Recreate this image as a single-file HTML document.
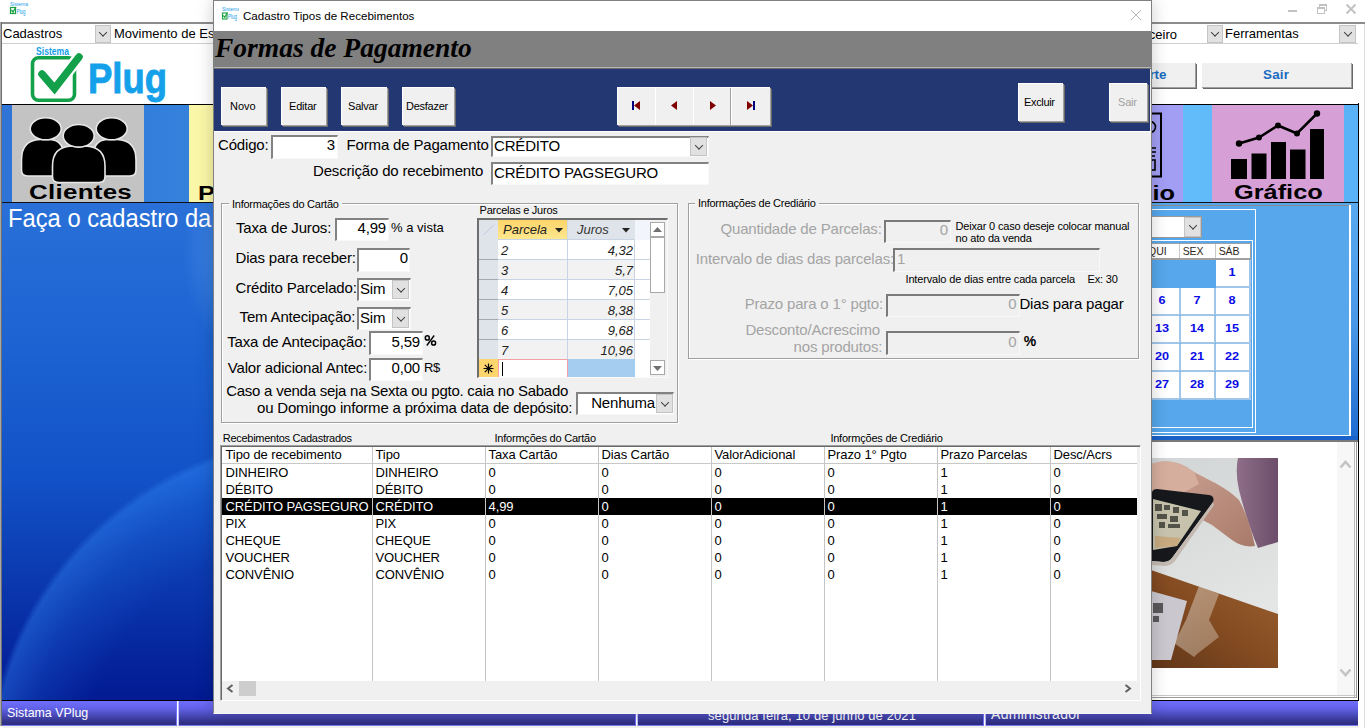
<!DOCTYPE html>
<html><head><meta charset="utf-8">
<style>
*{box-sizing:border-box;margin:0;padding:0}
html,body{width:1366px;height:728px;overflow:hidden;background:#fff;font-family:"Liberation Sans",sans-serif;color:#000}
.a{position:absolute}
.t{position:absolute;white-space:nowrap;line-height:1}
.combo{position:absolute;background:#fff;border-bottom:1px solid #d0d0d0}
.cbtn{position:absolute;background:#e1e1e1;border:1px solid #c4c4c4}
.cbtn:after{content:"";position:absolute;left:50%;top:50%;width:5px;height:5px;border-right:1px solid #404040;border-bottom:1px solid #404040;transform:translate(-50%,-75%) rotate(45deg)}
.btn3{position:absolute;background:#f0f0f0;border-top:1px solid #fff;border-left:1px solid #fff;box-shadow:1px 1px 0 #a0a0a0,2px 2px 0 #696969;}
.sunk{position:absolute;background:#fff;border-top:2px solid #828282;border-left:2px solid #828282;border-bottom:1px solid #f8f8f8;border-right:1px solid #f8f8f8}
.dis{background:#f0f0f0}
</style></head><body>
<!-- ============ MAIN WINDOW ============ -->
<div id="main" class="a" style="left:0;top:0;width:1366px;height:728px;background:#fff">

  <!-- title bar -->
  <svg class="a" style="left:9px;top:1px" width="19" height="15" viewBox="0 0 19 15" overflow="visible">
    <text x="1" y="5" font-family="Liberation Sans" font-size="5" fill="#1aa0e8">Sistema</text>
    <rect x="1.5" y="6.5" width="5" height="6" fill="none" stroke="#18a040" stroke-width="1.2"/>
    <path d="M2.5 9 L4 11 L7 6" fill="none" stroke="#18a040" stroke-width="1.3"/>
    <text x="7.5" y="12.5" font-family="Liberation Sans" font-size="6.5" fill="#1aa0e8" textLength="9" lengthAdjust="spacingAndGlyphs">Plug</text>
  </svg>
  <div class="a" style="left:1288px;top:10px;width:9px;height:2px;background:#c2c2c2"></div>
  <div class="a" style="left:1319px;top:4px;width:8px;height:7px;border:1px solid #c2c2c2;border-top-width:2px"></div>
  <div class="a" style="left:1317px;top:7px;width:8px;height:7px;border:1px solid #c2c2c2;border-top-width:2px;background:#fff"></div>
  <svg class="a" style="left:1345px;top:3px" width="12" height="12" viewBox="0 0 12 12"><path d="M1.5 1.5L10.5 10.5M10.5 1.5L1.5 10.5" stroke="#c2c2c2" stroke-width="1.9"/></svg>
  <!-- frame lines -->
  <div class="a" style="left:0;top:22px;width:1365px;height:2px;background:#8c8c8c"></div>
  <div class="a" style="left:0;top:22px;width:1px;height:704px;background:#a8a8a8"></div><div class="a" style="left:1px;top:22px;width:1px;height:704px;background:#6e6e6e"></div>
  <div class="a" style="left:1364px;top:24px;width:1px;height:704px;background:#dcdcdc"></div>
  <!-- combos row -->
  <div class="combo" style="left:2px;top:24px;width:1356px;height:20px"></div>
  <div class="t" style="left:3px;top:27px;font-size:13px">Cadastros</div>
  <div class="cbtn" style="left:95px;top:25px;width:16px;height:18px"></div>
  <div class="t" style="left:114px;top:27px;font-size:13px">Movimento de Es</div>
  <div class="t" style="left:777px;width:400px;text-align:right;top:28px;font-size:13px">Financeiro</div>
  <div class="cbtn" style="left:1207px;top:25px;width:16px;height:18px"></div>
  <div class="t" style="left:1225px;top:27px;font-size:13px">Ferramentas</div>
  <div class="cbtn" style="left:1339px;top:25px;width:17px;height:18px"></div>
  <!-- logo -->
  <svg class="a" style="left:28px;top:44px" width="142" height="60" viewBox="0 0 142 60">
    <text x="8" y="10.5" font-family="Liberation Sans" font-weight="bold" font-size="10.5" fill="#15a0ea" textLength="33" lengthAdjust="spacingAndGlyphs">Sistema</text>
    <rect x="4.5" y="13.8" width="42" height="42.5" rx="6" fill="none" stroke="#12a04a" stroke-width="3.6"/>
    <path d="M14 30 L26.5 44.5 L51 13" fill="none" stroke="#fff" stroke-width="12" stroke-linecap="round" stroke-linejoin="round"/>
    <path d="M14 30 L26.5 44.5 L51 13" fill="none" stroke="#12a04a" stroke-width="7.5" stroke-linecap="round" stroke-linejoin="miter"/>
    <text x="60" y="49" font-family="Liberation Sans" font-weight="bold" font-size="43" fill="#15a0ea" stroke="#15a0ea" stroke-width="0.9" textLength="79" lengthAdjust="spacingAndGlyphs">Plug</text>
  </svg>
  <!-- top right buttons -->
  <div class="btn3" style="left:1120px;top:62px;width:75px;height:25px"></div>
    <div class="btn3" style="left:1201px;top:62px;width:150px;height:25px"></div>
  <div class="t" style="left:1263px;top:68px;font-size:13.4px;font-weight:bold;color:#1a6cc0;letter-spacing:0.2px">Sair</div>
  <!-- tile row -->
  <div class="a" style="left:2px;top:104px;width:1357px;height:1px;background:#000"></div>
  <div class="a" style="left:2px;top:105px;width:1356px;height:97px;background:linear-gradient(90deg,#2f74d6,#3582dc 15%,#4a98e6 60%,#64befb 85%,#5ab2f6)"></div>
  <div class="a" style="left:1358px;top:103px;width:1px;height:598px;background:#000"></div>
  <div class="a" style="left:12px;top:105px;width:132px;height:97px;background:#c3c3c3"></div>
  <div class="a" style="left:189px;top:105px;width:30px;height:97px;background:#fbf7a8"></div>
  <div class="a" style="left:1100px;top:105px;width:83px;height:97px;background:#a29ef4"></div>
  <div class="a" style="left:1212px;top:105px;width:132px;height:97px;background:#d6a0d6"></div>
  <div class="a" style="left:2px;top:202px;width:1357px;height:1px;background:#111"></div>
  <!-- main blue area -->
  <div class="a" style="left:2px;top:203px;width:1356px;height:497px;background:radial-gradient(circle 345px at 328px 577px,rgba(40,125,240,0) 72%,rgba(40,125,240,0.2) 88%,rgba(50,135,245,0.4) 98%,rgba(40,125,240,0) 100%),radial-gradient(ellipse 55px 90px at 236px 55px,rgba(95,165,240,0.6),rgba(95,165,240,0) 100%),linear-gradient(180deg,#2a70d8 0%,#1c62d2 30%,#1252c8 55%,#0a36ac 78%,#021a92 100%)"></div>
  <div class="t" style="left:8px;top:206px;font-size:25px;color:#fff;transform:scaleX(0.95);transform-origin:0 0">Faça o cadastro da</div>
<!--MAIN2-->
<svg class="a" style="left:12px;top:105px" width="132" height="97" viewBox="12 105 132 97">
<g stroke="#e8e8e8" stroke-width="1.6">
<path d="M21.5 170 V160 Q21.5 140 40 139.5 H50 Q64 140 64 158 V176 H27.5 Q21.5 176 21.5 170 Z" fill="#000"/>
<path d="M93 176 V158 Q93 140 107 139.5 H117 Q136 140 136 160 V170 Q136 176 130 176 Z" fill="#000"/>
<ellipse cx="45.7" cy="128.8" rx="15.5" ry="11" fill="#000"/>
<ellipse cx="111.7" cy="128.8" rx="15.5" ry="11" fill="#000"/>
<path d="M52.5 176.5 V166 Q52.5 146.5 72 146 H85 Q105 146.5 105 166 V176.5 Q105 182.5 99 182.5 H58.5 Q52.5 182.5 52.5 176.5 Z" fill="#000"/>
<ellipse cx="78.7" cy="135.8" rx="15.5" ry="11.3" fill="#000"/>
</g>
</svg>
<div class="t" style="left:29px;top:183px;font-size:19.5px;font-weight:bold;transform:scaleX(1.33);transform-origin:0 0;letter-spacing:0.2px">Clientes</div>
<div class="t" style="left:198px;top:184px;font-size:19.5px;font-weight:bold;transform:scaleX(1.3);transform-origin:0 0">P</div>
<svg class="a" style="left:1212px;top:105px" width="132" height="97" viewBox="1212 105 132 97">
<rect x="1231" y="159" width="16" height="20" fill="#000"/>
<rect x="1251.5" y="153.5" width="15" height="25.5" fill="#000"/>
<rect x="1271" y="142" width="15" height="37" fill="#000"/>
<rect x="1290" y="149.5" width="15.5" height="29.5" fill="#000"/>
<rect x="1310" y="129" width="14" height="50" fill="#000"/>
<path d="M1239 143.5 L1259 137.5 L1278 125.5 L1297 133.5 L1317 113.5" fill="none" stroke="#000" stroke-width="2.6"/>
<circle cx="1239" cy="143.5" r="3.2"/><circle cx="1259" cy="137.5" r="3"/><circle cx="1278" cy="125.5" r="3"/><circle cx="1297" cy="133.5" r="3"/><circle cx="1317" cy="113.5" r="3.2"/>
</svg>
<div class="t" style="left:1234px;top:183px;font-size:19.5px;font-weight:bold;transform:scaleX(1.3);transform-origin:0 0">Gráfico</div>
<svg class="a" style="left:1151px;top:105px" width="32" height="97" viewBox="1151 105 32 97">
<rect x="1140" y="113.5" width="21" height="63" fill="none" stroke="#000" stroke-width="2"/>
<circle cx="1150" cy="127" r="5.5" fill="none" stroke="#000" stroke-width="1.6"/>
<path d="M1146 148H1156M1146 152H1156M1146 156H1155" stroke="#000" stroke-width="1.3"/>
<rect x="1144" y="160" width="11" height="10" fill="none" stroke="#000" stroke-width="1.6"/>
</svg>
<div class="t" style="left:775px;width:400px;text-align:right;top:183.79px;font-size:19.5px;font-weight:bold;transform:scaleX(1.3);transform-origin:100% 0">io</div>
<div class="a" style="left:1151px;top:203px;width:207px;height:237px;background:#56a7ec"></div>
<div class="a" style="left:1351px;top:203px;width:7px;height:237px;background:linear-gradient(180deg,#5aaaf0,#4a98e8 50%,#1f6ad0)"></div>
<div class="a" style="left:1151px;top:436px;width:207px;height:4px;background:#1a62c9"></div>
<div class="a" style="left:1151px;top:205px;width:200px;height:1px;background:#8a8a8a"></div>
<div class="a" style="left:1349px;top:205px;width:2px;height:231px;background:#fff"></div>
<div class="a" style="left:1151px;top:435px;width:200px;height:1px;background:#fff"></div>
<div class="a" style="left:1140px;top:209px;width:116px;height:224px;border:1px solid #fff;border-left:none"></div>
<div class="a" style="left:1140px;top:240px;width:113px;height:188px;border:1px solid #fff;border-left:none"></div>
<div class="a" style="left:1151px;top:216px;width:51px;height:22px;background:#fff;border:1px solid #9a9a9a;border-left:none"></div>
<div class="cbtn" style="left:1184px;top:217px;width:17px;height:20px"></div>
<div class="a" style="left:1140px;top:243px;width:111px;height:17px;background:#fff;border:1px solid #a0a0a0;border-left:none;border-bottom:2px solid #a0a0a0"></div>
<div class="a" style="left:1179px;top:244px;width:1px;height:14px;background:#c8c8c8"></div>
<div class="a" style="left:1215px;top:244px;width:1px;height:14px;background:#c8c8c8"></div>
<div class="t" style="left:1148px;top:245.91px;font-size:10.5px;color:#302818">QUI</div>
<div class="t" style="left:1182.7px;top:245.91px;font-size:10.5px;color:#302818;letter-spacing:-0.1px">SEX</div>
<div class="t" style="left:1218.7px;top:245.91px;font-size:10.5px;color:#302818;letter-spacing:-0.1px">SÁB</div>
<div class="a" style="left:1216px;top:260px;width:33px;height:26px;background:#fff"></div>
<div class="a" style="left:1216px;top:286px;width:34px;height:1.5px;background:#a2c6ea"></div>
<div class="t" style="left:1211.5px;width:40px;text-align:center;top:267.27px;font-size:11.5px;font-weight:bold;color:#0b0be8;transform:scaleX(1.1)">1</div>
<div class="a" style="left:1140px;top:288px;width:39px;height:26px;background:#fff"></div>
<div class="a" style="left:1140px;top:314px;width:40px;height:1.5px;background:#a2c6ea"></div>
<div class="t" style="left:1141.5px;width:40px;text-align:center;top:295.27px;font-size:11.5px;font-weight:bold;color:#0b0be8;transform:scaleX(1.1)">6</div>
<div class="a" style="left:1181px;top:288px;width:33px;height:26px;background:#fff"></div>
<div class="a" style="left:1181px;top:314px;width:34px;height:1.5px;background:#a2c6ea"></div>
<div class="t" style="left:1176.5px;width:40px;text-align:center;top:295.27px;font-size:11.5px;font-weight:bold;color:#0b0be8;transform:scaleX(1.1)">7</div>
<div class="a" style="left:1216px;top:288px;width:33px;height:26px;background:#fff"></div>
<div class="a" style="left:1216px;top:314px;width:34px;height:1.5px;background:#a2c6ea"></div>
<div class="t" style="left:1211.5px;width:40px;text-align:center;top:295.27px;font-size:11.5px;font-weight:bold;color:#0b0be8;transform:scaleX(1.1)">8</div>
<div class="a" style="left:1140px;top:316px;width:39px;height:26px;background:#fff"></div>
<div class="a" style="left:1140px;top:342px;width:40px;height:1.5px;background:#a2c6ea"></div>
<div class="t" style="left:1141.5px;width:40px;text-align:center;top:323.27px;font-size:11.5px;font-weight:bold;color:#0b0be8;transform:scaleX(1.1)">13</div>
<div class="a" style="left:1181px;top:316px;width:33px;height:26px;background:#fff"></div>
<div class="a" style="left:1181px;top:342px;width:34px;height:1.5px;background:#a2c6ea"></div>
<div class="t" style="left:1176.5px;width:40px;text-align:center;top:323.27px;font-size:11.5px;font-weight:bold;color:#0b0be8;transform:scaleX(1.1)">14</div>
<div class="a" style="left:1216px;top:316px;width:33px;height:26px;background:#fff"></div>
<div class="a" style="left:1216px;top:342px;width:34px;height:1.5px;background:#a2c6ea"></div>
<div class="t" style="left:1211.5px;width:40px;text-align:center;top:323.27px;font-size:11.5px;font-weight:bold;color:#0b0be8;transform:scaleX(1.1)">15</div>
<div class="a" style="left:1140px;top:344px;width:39px;height:26px;background:#fff"></div>
<div class="a" style="left:1140px;top:370px;width:40px;height:1.5px;background:#a2c6ea"></div>
<div class="t" style="left:1141.5px;width:40px;text-align:center;top:351.27px;font-size:11.5px;font-weight:bold;color:#0b0be8;transform:scaleX(1.1)">20</div>
<div class="a" style="left:1181px;top:344px;width:33px;height:26px;background:#fff"></div>
<div class="a" style="left:1181px;top:370px;width:34px;height:1.5px;background:#a2c6ea"></div>
<div class="t" style="left:1176.5px;width:40px;text-align:center;top:351.27px;font-size:11.5px;font-weight:bold;color:#0b0be8;transform:scaleX(1.1)">21</div>
<div class="a" style="left:1216px;top:344px;width:33px;height:26px;background:#fff"></div>
<div class="a" style="left:1216px;top:370px;width:34px;height:1.5px;background:#a2c6ea"></div>
<div class="t" style="left:1211.5px;width:40px;text-align:center;top:351.27px;font-size:11.5px;font-weight:bold;color:#0b0be8;transform:scaleX(1.1)">22</div>
<div class="a" style="left:1140px;top:372px;width:39px;height:26px;background:#fff"></div>
<div class="a" style="left:1140px;top:398px;width:40px;height:1.5px;background:#a2c6ea"></div>
<div class="t" style="left:1141.5px;width:40px;text-align:center;top:379.27px;font-size:11.5px;font-weight:bold;color:#0b0be8;transform:scaleX(1.1)">27</div>
<div class="a" style="left:1181px;top:372px;width:33px;height:26px;background:#fff"></div>
<div class="a" style="left:1181px;top:398px;width:34px;height:1.5px;background:#a2c6ea"></div>
<div class="t" style="left:1176.5px;width:40px;text-align:center;top:379.27px;font-size:11.5px;font-weight:bold;color:#0b0be8;transform:scaleX(1.1)">28</div>
<div class="a" style="left:1216px;top:372px;width:33px;height:26px;background:#fff"></div>
<div class="a" style="left:1216px;top:398px;width:34px;height:1.5px;background:#a2c6ea"></div>
<div class="t" style="left:1211.5px;width:40px;text-align:center;top:379.27px;font-size:11.5px;font-weight:bold;color:#0b0be8;transform:scaleX(1.1)">29</div>
<div class="a" style="left:1179px;top:288px;width:2px;height:27px;background:#a2c6ea"></div>
<div class="a" style="left:1214px;top:288px;width:2px;height:27px;background:#a2c6ea"></div>
<div class="a" style="left:1179px;top:316px;width:2px;height:27px;background:#a2c6ea"></div>
<div class="a" style="left:1214px;top:316px;width:2px;height:27px;background:#a2c6ea"></div>
<div class="a" style="left:1179px;top:344px;width:2px;height:27px;background:#a2c6ea"></div>
<div class="a" style="left:1214px;top:344px;width:2px;height:27px;background:#a2c6ea"></div>
<div class="a" style="left:1179px;top:372px;width:2px;height:27px;background:#a2c6ea"></div>
<div class="a" style="left:1214px;top:372px;width:2px;height:27px;background:#a2c6ea"></div>
<div class="a" style="left:1249px;top:260px;width:1.5px;height:140px;background:#a2c6ea"></div>
<div class="a" style="left:1151px;top:440px;width:207px;height:261px;background:#fff;border-top:2px solid #7a7a7a"></div>
<div class="a" style="left:1337px;top:442px;width:17px;height:253px;background:#f7f7f7"></div>
<div class="a" style="left:1354px;top:442px;width:1px;height:255px;background:#b8b8b8"></div>
<div class="a" style="left:1356px;top:442px;width:1px;height:256px;background:#9a9a9a"></div>
<div class="a" style="left:1151px;top:695px;width:205px;height:1px;background:#c8c8c8"></div>
<div class="a" style="left:1151px;top:697px;width:206px;height:1px;background:#9a9a9a"></div>
<svg class="a" style="left:1339px;top:459px" width="13" height="10" viewBox="0 0 13 10"><path d="M1.5 8.5L6.5 3L11.5 8.5" fill="none" stroke="#c4c4c4" stroke-width="2.6"/></svg>
<svg class="a" style="left:1339px;top:668px" width="13" height="10" viewBox="0 0 13 10"><path d="M1.5 1.5L6.5 7L11.5 1.5" fill="none" stroke="#c4c4c4" stroke-width="2.6"/></svg>
<svg class="a" style="left:1151px;top:458px" width="127" height="210" viewBox="0 0 127 210">
<defs>
<linearGradient id="bgw" x1="0" y1="0" x2="0.3" y2="1"><stop offset="0" stop-color="#d2d5d5"/><stop offset="0.5" stop-color="#dcdede"/><stop offset="1" stop-color="#e6e7e7"/></linearGradient>
<linearGradient id="wood" x1="1" y1="0" x2="0" y2="1"><stop offset="0" stop-color="#9c6230"/><stop offset="0.5" stop-color="#854c22"/><stop offset="1" stop-color="#603618"/></linearGradient>
<linearGradient id="skin" x1="0" y1="0" x2="1" y2="1"><stop offset="0" stop-color="#d0a696"/><stop offset="1" stop-color="#a87a6a"/></linearGradient>
<linearGradient id="slv" x1="0" y1="0" x2="1" y2="0"><stop offset="0" stop-color="#8e6e88"/><stop offset="1" stop-color="#6c4e6a"/></linearGradient>
<linearGradient id="glr" x1="0" y1="0" x2="1" y2="1"><stop offset="0" stop-color="#e4dcd4"/><stop offset="1" stop-color="#c8b098"/></linearGradient>
</defs>
<rect width="127" height="210" fill="url(#bgw)"/>
<path d="M87 0 H127 V84 L107 90 Q96 64 88 32 Q84 14 87 0Z" fill="url(#slv)"/>
<path d="M0 6 Q22 -2 43 14 L66 26 Q80 34 88 42 Q98 60 104 88 Q92 90 81 82 L61 67 L40 56 L0 40Z" fill="url(#skin)"/>
<path d="M0 6 Q22 -2 43 14 L48 26 L30 36 L0 36Z" fill="#d6ae9e"/>
<path d="M1 34 Q2 31 6 31 L58 37 Q64 38 62 44 L21 100 Q18 104 12 104 L1 103Z" fill="#16181c"/>
<path d="M1 103 L12 104 Q18 104 21 100 L62 44 L63 47 L24 103 Q20 108 13 108 L1 107Z" fill="#c4bab2"/>
<path d="M2 41 L50 53 L26 88 L2 92Z" fill="#c6c2ac"/>
<path d="M4 46 h7 v7 h-7z M13 47 h6 v5 h-6z M22 49 h6 v6 h-6z M31 52 h6 v6 h-6z M6 56 h10 v5 h-10z M19 58 h8 v6 h-8z M8 64 h6 v6 h-6z M17 66 h12 v4 h-12z" fill="#2e2e2a" opacity="0.75"/>
<path d="M4 78 L30 80 L26 88 L4 90Z" fill="#c89a62" opacity="0.6"/>
<path d="M0 112 L127 156 V210 H0Z" fill="url(#wood)"/>
<path d="M0 133 L36 143 L20 202 L0 202Z" fill="#cbc7cf"/>
<path d="M2 145 h10 v10 h-10z M4 147 h6 v6 h-6z M2 158 h6 v6 h-6z" fill="#333" opacity="0.75"/>
<path d="M48 128 L68 136 L58 162 L68 179 L46 196 L43 199 L23 185 L35 162Z" fill="url(#glr)" opacity="0.5"/>
</svg>
<div class="t" style="left:766.5px;width:400px;text-align:right;top:68.16px;font-size:13.4px;font-weight:bold;color:#1a6cc0">Suporte</div>
<!--/MAIN2-->
  <!-- status bar -->
  <div class="a" style="left:2px;top:700px;width:1356px;height:1px;background:#000"></div>
  <div class="a" style="left:2px;top:701px;width:1356px;height:24px;background:linear-gradient(180deg,#6e6efc 0%,#6262ea 30%,#4848b4 62%,#34348e 85%,#2c2c80 100%)"></div>
  <div class="a" style="left:2px;top:725px;width:1356px;height:1px;background:#7a7af4"></div>
  <div class="a" style="left:176px;top:701px;width:1px;height:25px;background:#7070ff"></div>
  <div class="a" style="left:177px;top:701px;width:1px;height:25px;background:#fff"></div>
  <div class="a" style="left:178px;top:701px;width:1px;height:25px;background:#c0c0ff"></div>
  <div class="a" style="left:635px;top:701px;width:1px;height:25px;background:#7070ff"></div>
  <div class="a" style="left:636px;top:701px;width:1px;height:25px;background:#fff"></div>
  <div class="a" style="left:637px;top:701px;width:1px;height:25px;background:#c0c0ff"></div>
  <div class="a" style="left:983px;top:701px;width:1px;height:25px;background:#7070ff"></div>
  <div class="a" style="left:984px;top:701px;width:1px;height:25px;background:#fff"></div>
  <div class="a" style="left:985px;top:701px;width:1px;height:25px;background:#c0c0ff"></div>
  <div class="t" style="left:7px;top:707px;font-size:12.4px;color:#fff">Sistama VPlug</div>
  <div class="t" style="left:708px;top:709px;font-size:13px;color:#fff;letter-spacing:0.1px">segunda feira, 10 de junho de 2021</div>
  <div class="t" style="left:991px;top:707px;font-size:14px;color:#fff;letter-spacing:0.3px">Administrador</div>
  <div class="a" style="left:2px;top:726px;width:1357px;height:2px;background:#f2f2ec"></div>
</div>
<!-- ============ DIALOG ============ -->
<div id="dlg" class="a" style="left:213px;top:0;width:939px;height:714px;background:#f0f0f0;border:1px solid rgba(40,40,40,0.55);border-bottom-color:#f4f4f4;box-shadow:0 0 16px rgba(0,0,0,0.2)">
</div>

<!-- dialog title -->
<div class="a" style="left:214px;top:1px;width:937px;height:30px;background:#fff"></div>
<svg class="a" style="left:221px;top:6px" width="18" height="15" viewBox="0 0 18 15">
  <text x="1" y="5" font-family="Liberation Sans" font-size="5" fill="#1aa0e8">Sistema</text>
  <rect x="1.5" y="7" width="4.5" height="6" fill="none" stroke="#18a040" stroke-width="1.1"/>
  <path d="M2.3 9.5 L3.8 11.3 L6.5 6.5" fill="none" stroke="#18a040" stroke-width="1.2"/>
  <text x="7" y="13" font-family="Liberation Sans" font-size="6.5" fill="#1aa0e8" textLength="9" lengthAdjust="spacingAndGlyphs">Plug</text>
</svg>
<div class="t" style="left:243px;top:10px;font-size:11.6px">Cadastro Tipos de Recebimentos</div>
<svg class="a" style="left:1130px;top:9px" width="12" height="12" viewBox="0 0 12 12"><path d="M1 1L11 11M11 1L1 11" stroke="#b8b8b8" stroke-width="1"/></svg>
<!-- gray header band -->
<div class="a" style="left:214px;top:31px;width:937px;height:36px;background:#808080"></div>
<div class="a" style="left:214px;top:67px;width:937px;height:1px;background:#b4b4b4"></div>
<div class="a" style="left:214px;top:68px;width:937px;height:1px;background:#6c6c6c"></div>
<div class="t" style="left:215px;top:34px;font-family:'Liberation Serif',serif;font-weight:bold;font-style:italic;font-size:27.5px;color:#000">Formas de Pagamento</div>
<!-- navy band -->
<div class="a" style="left:214px;top:69px;width:936px;height:62px;background:#233872"></div>
<div class="a" style="left:214px;top:131px;width:937px;height:1px;background:#fff"></div>
<div class="btn3" style="left:221px;top:87px;width:45px;height:38px"></div>
<div class="t" style="left:230px;top:101px;font-size:11px">Novo</div>
<div class="btn3" style="left:281px;top:87px;width:45px;height:38px"></div>
<div class="t" style="left:289px;top:101px;font-size:11px;letter-spacing:-0.2px">Editar</div>
<div class="btn3" style="left:341px;top:87px;width:46px;height:38px"></div>
<div class="t" style="left:348px;top:101px;font-size:11px;letter-spacing:-0.2px">Salvar</div>
<div class="btn3" style="left:402px;top:87px;width:52px;height:38px"></div>
<div class="t" style="left:406px;top:101px;font-size:11px;letter-spacing:-0.25px">Desfazer</div>
<!-- nav buttons -->
<div class="btn3" style="left:617px;top:87px;width:153px;height:38px"></div>
<div class="a" style="left:655px;top:88px;width:1px;height:37px;background:#fff"></div>
<div class="a" style="left:693px;top:88px;width:1px;height:37px;background:#fff"></div>
<div class="a" style="left:730px;top:88px;width:1px;height:37px;background:#a0a0a0"></div>
<div class="a" style="left:731px;top:88px;width:1px;height:37px;background:#fff"></div>
<div class="a" style="left:632px;top:101px;width:2px;height:9px;background:#000080"></div>
<svg class="a" style="left:634px;top:101px" width="6" height="9"><path d="M0 4.5L6 0V9Z" fill="#800000"/></svg>
<svg class="a" style="left:671px;top:101px" width="6" height="9"><path d="M0 4.5L6 0V9Z" fill="#800000"/></svg>
<svg class="a" style="left:710px;top:101px" width="6" height="9"><path d="M6 4.5L0 0V9Z" fill="#800000"/></svg>
<svg class="a" style="left:747px;top:101px" width="6" height="9"><path d="M6 4.5L0 0V9Z" fill="#800000"/></svg>
<div class="a" style="left:753px;top:101px;width:2px;height:9px;background:#000080"></div>
<div class="btn3" style="left:1018px;top:83px;width:45px;height:38px"></div>
<div class="t" style="left:1024px;top:97px;font-size:11px;letter-spacing:-0.35px">Excluir</div>
<div class="btn3" style="left:1109px;top:83px;width:38px;height:38px"></div>
<div class="t" style="left:1118px;top:97px;font-size:11px;color:#a0a0a0;letter-spacing:-0.2px">Sair</div>

<!--BODY-->
<div class="t" style="left:218px;top:137.10px;font-size:15px;letter-spacing:-0.17px;">Código:</div>
<div class="sunk" style="left:271px;top:135px;width:67px;height:24px;"></div>
<div class="t" style="left:-65px;width:400px;text-align:right;top:137.10px;font-size:15px;letter-spacing:-0.17px;">3</div>
<div class="t" style="left:346.6px;top:137.10px;font-size:15px;letter-spacing:-0.17px;">Forma de Pagamento</div>
<div class="sunk" style="left:491px;top:136px;width:218px;height:21px;"></div>
<div class="t" style="left:494px;top:137.80px;font-size:15px;letter-spacing:-0.17px;">CRÉDITO</div>
<div class="cbtn" style="left:690px;top:137px;width:17px;height:19px"></div>
<div class="t" style="left:313px;top:162.70px;font-size:15px;letter-spacing:-0.17px;">Descrição do recebimento</div>
<div class="sunk" style="left:491px;top:162px;width:218px;height:23px;"></div>
<div class="t" style="left:494px;top:164.80px;font-size:15px;letter-spacing:-0.17px;">CRÉDITO PAGSEGURO</div>
<div class="a" style="left:221px;top:203px;width:457px;height:220px;border:1px solid #a0a0a0;box-shadow:inset 1px 1px 0 #fff,1px 1px 0 #fff"></div>
<div class="a" style="left:229px;top:200px;width:113px;height:6px;background:#f0f0f0"></div>
<div class="t" style="left:232px;top:198.69px;font-size:11px;letter-spacing:-0.25px">Informações do Cartão</div>
<div class="a" style="left:688px;top:203px;width:451px;height:156px;border:1px solid #a0a0a0;box-shadow:inset 1px 1px 0 #fff,1px 1px 0 #fff"></div>
<div class="a" style="left:695px;top:200px;width:124px;height:6px;background:#f0f0f0"></div>
<div class="t" style="left:698px;top:197.69px;font-size:11px;letter-spacing:-0.25px">Informações de Crediário</div>
<div class="t" style="left:236px;top:219.70px;font-size:15px;letter-spacing:-0.17px;">Taxa de Juros:</div>
<div class="sunk" style="left:335px;top:218px;width:54px;height:23px;"></div>
<div class="t" style="left:-14px;width:400px;text-align:right;top:219.70px;font-size:15px;letter-spacing:-0.17px;">4,99</div>
<div class="t" style="left:391px;top:220.90px;font-size:13px;">% a vista</div>
<div class="t" style="left:235.5px;top:249.80px;font-size:15px;letter-spacing:-0.17px;">Dias para receber:</div>
<div class="sunk" style="left:357px;top:248px;width:53px;height:24px;"></div>
<div class="t" style="left:8px;width:400px;text-align:right;top:249.80px;font-size:15px;letter-spacing:-0.17px;">0</div>
<div class="t" style="left:235.5px;top:280.00px;font-size:15px;letter-spacing:-0.17px;">Crédito Parcelado:</div>
<div class="sunk" style="left:357px;top:278px;width:54px;height:23px;"></div>
<div class="t" style="left:360px;top:280.80px;font-size:15px;letter-spacing:-0.17px;">Sim</div>
<div class="cbtn" style="left:392px;top:280px;width:17px;height:19px"></div>
<div class="t" style="left:239.6px;top:308.80px;font-size:15px;letter-spacing:-0.17px;">Tem Antecipação:</div>
<div class="sunk" style="left:357px;top:307px;width:54px;height:23px;"></div>
<div class="t" style="left:360px;top:309.60px;font-size:15px;letter-spacing:-0.17px;">Sim</div>
<div class="cbtn" style="left:392px;top:309px;width:17px;height:19px"></div>
<div class="t" style="left:227.2px;top:334.00px;font-size:15px;letter-spacing:-0.17px;">Taxa de Antecipação:</div>
<div class="sunk" style="left:369px;top:331px;width:54px;height:24px;"></div>
<div class="t" style="left:20px;width:400px;text-align:right;top:334.00px;font-size:15px;letter-spacing:-0.17px;">5,59</div>
<svg class="a" style="left:424px;top:335px" width="13" height="11" viewBox="0 0 13 11"><ellipse cx="3.3" cy="2.9" rx="2" ry="2.1" fill="none" stroke="#000" stroke-width="1.5"/><ellipse cx="9.6" cy="8" rx="2" ry="2.1" fill="none" stroke="#000" stroke-width="1.5"/><path d="M10.2 0.5 L2.8 10.5" stroke="#000" stroke-width="1.4"/></svg>
<div class="t" style="left:227.8px;top:359.70px;font-size:15px;letter-spacing:-0.17px;">Valor adicional Antec:</div>
<div class="sunk" style="left:369px;top:358px;width:54px;height:23px;"></div>
<div class="t" style="left:20px;width:400px;text-align:right;top:359.70px;font-size:15px;letter-spacing:-0.17px;">0,00</div>
<div class="t" style="left:424px;top:361.30px;font-size:13px;letter-spacing:-0.4px">R$</div>
<div class="t" style="left:226.2px;top:383.00px;font-size:15px;letter-spacing:-0.25px">Caso a venda seja na Sexta ou pgto. caia no Sabado</div>
<div class="t" style="left:257.1px;top:399.50px;font-size:15px;letter-spacing:-0.2px">ou Domingo informe a próxima data de depósito:</div>
<div class="sunk" style="left:576px;top:392px;width:98px;height:23px;"></div>
<div class="t" style="left:255px;width:400px;text-align:right;top:395.30px;font-size:15px;letter-spacing:-0.17px;">Nenhuma</div>
<div class="cbtn" style="left:656px;top:394px;width:17px;height:19px"></div>
<div class="t" style="left:479.6px;top:204.69px;font-size:11px;letter-spacing:-0.25px">Parcelas e Juros</div>
<div class="a" style="left:477px;top:218px;width:191px;height:160px;background:#f0f0f0;border-top:2px solid #6e6e6e;border-left:2px solid #6e6e6e;border-right:1px solid #fafafa;border-bottom:1px solid #fafafa"></div>
<div class="a" style="left:479px;top:220px;width:19px;height:139px;background:#dfe3ea"></div>
<svg class="a" style="left:483px;top:224px" width="12" height="12"><path d="M11 0.5 L0.5 11" stroke="#b8c8e0" stroke-width="1"/></svg>
<div class="a" style="left:498px;top:220px;width:69px;height:20px;background:linear-gradient(180deg,#fcd46a,#ffe98f)"></div>
<div class="a" style="left:567px;top:220px;width:68px;height:20px;background:#dfe3ea;border-left:1px solid #d0d8e8"></div>
<div class="a" style="left:635px;top:220px;width:15px;height:20px;background:#f2f5fb"></div>
<div class="a" style="left:498px;top:239px;width:137px;height:1px;background:#c9d3e6"></div>
<div class="t" style="left:503px;top:222.70px;font-size:13px;font-style:italic;color:#222">Parcela</div>
<div class="t" style="left:577px;top:222.70px;font-size:13px;font-style:italic;color:#333">Juros</div>
<svg class="a" style="left:555px;top:228px" width="8" height="5"><path d="M0 0H8L4 4.5Z" fill="#222"/></svg>
<svg class="a" style="left:622px;top:228px" width="8" height="5"><path d="M0 0H8L4 4.5Z" fill="#222"/></svg>
<div class="a" style="left:498px;top:240px;width:137px;height:19px;background:#ffffff"></div>
<div class="a" style="left:498px;top:259px;width:152px;height:1px;background:#c9d3e6"></div>
<div class="a" style="left:635px;top:240px;width:15px;height:19px;background:#fff"></div>
<div class="a" style="left:479px;top:259px;width:19px;height:1px;background:#a4a8b0"></div>
<div class="t" style="left:501px;top:244.00px;font-size:13px;font-style:italic;color:#222">2</div>
<div class="t" style="left:233px;width:400px;text-align:right;top:244.00px;font-size:13px;font-style:italic;color:#222">4,32</div>
<div class="a" style="left:498px;top:260px;width:137px;height:19px;background:#f2f2f2"></div>
<div class="a" style="left:498px;top:279px;width:152px;height:1px;background:#c9d3e6"></div>
<div class="a" style="left:635px;top:260px;width:15px;height:19px;background:#fff"></div>
<div class="a" style="left:479px;top:279px;width:19px;height:1px;background:#a4a8b0"></div>
<div class="t" style="left:501px;top:264.00px;font-size:13px;font-style:italic;color:#222">3</div>
<div class="t" style="left:233px;width:400px;text-align:right;top:264.00px;font-size:13px;font-style:italic;color:#222">5,7</div>
<div class="a" style="left:498px;top:280px;width:137px;height:19px;background:#ffffff"></div>
<div class="a" style="left:498px;top:299px;width:152px;height:1px;background:#c9d3e6"></div>
<div class="a" style="left:635px;top:280px;width:15px;height:19px;background:#fff"></div>
<div class="a" style="left:479px;top:299px;width:19px;height:1px;background:#a4a8b0"></div>
<div class="t" style="left:501px;top:284.00px;font-size:13px;font-style:italic;color:#222">4</div>
<div class="t" style="left:233px;width:400px;text-align:right;top:284.00px;font-size:13px;font-style:italic;color:#222">7,05</div>
<div class="a" style="left:498px;top:300px;width:137px;height:19px;background:#f2f2f2"></div>
<div class="a" style="left:498px;top:319px;width:152px;height:1px;background:#c9d3e6"></div>
<div class="a" style="left:635px;top:300px;width:15px;height:19px;background:#fff"></div>
<div class="a" style="left:479px;top:319px;width:19px;height:1px;background:#a4a8b0"></div>
<div class="t" style="left:501px;top:304.00px;font-size:13px;font-style:italic;color:#222">5</div>
<div class="t" style="left:233px;width:400px;text-align:right;top:304.00px;font-size:13px;font-style:italic;color:#222">8,38</div>
<div class="a" style="left:498px;top:320px;width:137px;height:19px;background:#ffffff"></div>
<div class="a" style="left:498px;top:339px;width:152px;height:1px;background:#c9d3e6"></div>
<div class="a" style="left:635px;top:320px;width:15px;height:19px;background:#fff"></div>
<div class="a" style="left:479px;top:339px;width:19px;height:1px;background:#a4a8b0"></div>
<div class="t" style="left:501px;top:324.00px;font-size:13px;font-style:italic;color:#222">6</div>
<div class="t" style="left:233px;width:400px;text-align:right;top:324.00px;font-size:13px;font-style:italic;color:#222">9,68</div>
<div class="a" style="left:498px;top:340px;width:137px;height:19px;background:#f2f2f2"></div>
<div class="a" style="left:498px;top:359px;width:152px;height:1px;background:#c9d3e6"></div>
<div class="a" style="left:635px;top:340px;width:15px;height:19px;background:#fff"></div>
<div class="a" style="left:479px;top:359px;width:19px;height:1px;background:#a4a8b0"></div>
<div class="t" style="left:501px;top:344.00px;font-size:13px;font-style:italic;color:#222">7</div>
<div class="t" style="left:233px;width:400px;text-align:right;top:344.00px;font-size:13px;font-style:italic;color:#222">10,96</div>
<div class="a" style="left:567px;top:240px;width:1px;height:119px;background:#c9d3e6"></div>
<div class="a" style="left:634px;top:240px;width:1px;height:119px;background:#c9d3e6"></div>
<div class="a" style="left:479px;top:359px;width:19px;height:18px;background:#fcd56c"></div>
<svg class="a" style="left:483px;top:363px" width="11" height="11" viewBox="0 0 11 11"><path d="M5.5 0.5V10.5M0.5 5.5H10.5M1.8 1.8L9.2 9.2M9.2 1.8L1.8 9.2" stroke="#000" stroke-width="1.2"/></svg>
<div class="a" style="left:498px;top:359px;width:70px;height:18px;background:#fff;border:1px solid #f4a0a4;border-bottom:none"></div>
<div class="a" style="left:502px;top:362px;width:1px;height:14px;background:#000"></div>
<div class="a" style="left:568px;top:359px;width:67px;height:18px;background:#a5cdef"></div>
<div class="a" style="left:635px;top:359px;width:15px;height:18px;background:#fff"></div>
<div class="a" style="left:650px;top:220px;width:16px;height:157px;background:#f0f0f0"></div>
<div class="a" style="left:650px;top:222px;width:15px;height:15px;background:#fff;border:1px solid #a8a8a8"></div>
<svg class="a" style="left:653px;top:227px" width="9" height="5"><path d="M0 5H9L4.5 0Z" fill="#707070"/></svg>
<div class="a" style="left:650px;top:237px;width:15px;height:56px;background:#fff;border:1px solid #a8a8a8"></div>
<div class="a" style="left:650px;top:360px;width:15px;height:15px;background:#fff;border:1px solid #a8a8a8"></div>
<svg class="a" style="left:653px;top:366px" width="9" height="5"><path d="M0 0H9L4.5 5Z" fill="#707070"/></svg>
<div class="t" style="left:720.5px;top:221.00px;font-size:15px;letter-spacing:-0.17px;color:#a4a4a4">Quantidade de Parcelas:</div>
<div class="sunk" style="left:884px;top:220px;width:67px;height:23px;background:#f0f0f0;border-top-color:#7a7a7a;border-left-color:#7a7a7a"></div>
<div class="t" style="left:548px;width:400px;text-align:right;top:221.80px;font-size:15px;letter-spacing:-0.17px;color:#a4a4a4">0</div>
<div class="t" style="left:955.6px;top:220.89px;font-size:11px;letter-spacing:-0.19px">Deixar 0 caso deseje colocar manual</div>
<div class="t" style="left:955.6px;top:233.09px;font-size:11px;letter-spacing:-0.19px">no ato da venda</div>
<div class="t" style="left:695.8px;top:251.00px;font-size:15px;letter-spacing:-0.17px;color:#a4a4a4">Intervalo de dias das parcelas:</div>
<div class="sunk" style="left:893px;top:248px;width:207px;height:24px;background:#f0f0f0;border-top-color:#7a7a7a;border-left-color:#7a7a7a"></div>
<div class="t" style="left:897px;top:251.00px;font-size:15px;letter-spacing:-0.17px;color:#a4a4a4">1</div>
<div class="t" style="left:905.5px;top:274.09px;font-size:11px;letter-spacing:-0.15px">Intervalo de dias entre cada parcela</div>
<div class="t" style="left:1087.5px;top:274.09px;font-size:11px;letter-spacing:-0.15px">Ex: 30</div>
<div class="t" style="left:744.7px;top:296.30px;font-size:15px;letter-spacing:-0.17px;color:#a4a4a4">Prazo para o 1° pgto:</div>
<div class="sunk" style="left:886px;top:294px;width:134px;height:23px;background:#f0f0f0;border-top-color:#7a7a7a;border-left-color:#7a7a7a"></div>
<div class="t" style="left:616.5px;width:400px;text-align:right;top:296.30px;font-size:15px;letter-spacing:-0.17px;color:#a4a4a4">0</div>
<div class="t" style="left:1019.4px;top:296.30px;font-size:15px;letter-spacing:-0.17px;">Dias para pagar</div>
<div class="t" style="left:745.4px;top:321.80px;font-size:15px;letter-spacing:-0.17px;color:#a4a4a4">Desconto/Acrescimo</div>
<div class="t" style="left:793.6px;top:339.00px;font-size:15px;letter-spacing:-0.17px;color:#a4a4a4">nos produtos:</div>
<div class="sunk" style="left:886px;top:331px;width:134px;height:24px;background:#f0f0f0;border-top-color:#7a7a7a;border-left-color:#7a7a7a"></div>
<div class="t" style="left:616.5px;width:400px;text-align:right;top:333.50px;font-size:15px;letter-spacing:-0.17px;color:#a4a4a4">0</div>
<div class="t" style="left:1023.7px;top:333.95px;font-size:14px;font-weight:bold">%</div>
<div class="t" style="left:222.8px;top:433.19px;font-size:11px;letter-spacing:-0.28px">Recebimentos Cadastrados</div>
<div class="t" style="left:494.5px;top:433.19px;font-size:11px;letter-spacing:-0.22px">Informções do Cartão</div>
<div class="t" style="left:830.4px;top:433.19px;font-size:11px;letter-spacing:-0.22px">Informções de Crediário</div>
<div class="a" style="left:220px;top:445px;width:921px;height:256px;background:#f0f0f0;border-top:1px solid #a0a0a0;border-left:1px solid #a0a0a0;border-right:1px solid #fff;border-bottom:1px solid #fff;box-shadow:inset 1px 1px 0 #696969"></div>
<div class="a" style="left:222px;top:447px;width:915px;height:234px;background:#fff"></div>
<div class="a" style="left:222px;top:463px;width:915px;height:1px;background:#c8c8c8"></div>
<div class="a" style="left:222px;top:498px;width:915px;height:17px;background:#000"></div>
<div class="a" style="left:372px;top:447px;width:1px;height:234px;background:#c4c4c4"></div>
<div class="a" style="left:485px;top:447px;width:1px;height:234px;background:#c4c4c4"></div>
<div class="a" style="left:598px;top:447px;width:1px;height:234px;background:#c4c4c4"></div>
<div class="a" style="left:711px;top:447px;width:1px;height:234px;background:#c4c4c4"></div>
<div class="a" style="left:824px;top:447px;width:1px;height:234px;background:#c4c4c4"></div>
<div class="a" style="left:937px;top:447px;width:1px;height:234px;background:#c4c4c4"></div>
<div class="a" style="left:1050px;top:447px;width:1px;height:234px;background:#c4c4c4"></div>
<div class="t" style="left:225.5px;top:447.80px;font-size:13px;letter-spacing:-0.1px">Tipo de recebimento</div>
<div class="t" style="left:375.5px;top:447.80px;font-size:13px;letter-spacing:-0.1px">Tipo</div>
<div class="t" style="left:488.5px;top:447.80px;font-size:13px;letter-spacing:-0.1px">Taxa Cartão</div>
<div class="t" style="left:601.5px;top:447.80px;font-size:13px;letter-spacing:-0.1px">Dias Cartão</div>
<div class="t" style="left:714.5px;top:447.80px;font-size:13px;letter-spacing:-0.1px">ValorAdicional</div>
<div class="t" style="left:827.5px;top:447.80px;font-size:13px;letter-spacing:-0.1px">Prazo 1° Pgto</div>
<div class="t" style="left:940.5px;top:447.80px;font-size:13px;letter-spacing:-0.1px">Prazo Parcelas</div>
<div class="t" style="left:1053.5px;top:447.80px;font-size:13px;letter-spacing:-0.1px">Desc/Acrs</div>
<div class="t" style="left:225.5px;top:466.00px;font-size:13px;letter-spacing:-0.1px;color:#000">DINHEIRO</div>
<div class="t" style="left:375.5px;top:466.00px;font-size:13px;letter-spacing:-0.1px;color:#000">DINHEIRO</div>
<div class="t" style="left:488.5px;top:466.00px;font-size:13px;letter-spacing:-0.1px;color:#000">0</div>
<div class="t" style="left:601.5px;top:466.00px;font-size:13px;letter-spacing:-0.1px;color:#000">0</div>
<div class="t" style="left:714.5px;top:466.00px;font-size:13px;letter-spacing:-0.1px;color:#000">0</div>
<div class="t" style="left:827.5px;top:466.00px;font-size:13px;letter-spacing:-0.1px;color:#000">0</div>
<div class="t" style="left:940.5px;top:466.00px;font-size:13px;letter-spacing:-0.1px;color:#000">1</div>
<div class="t" style="left:1053.5px;top:466.00px;font-size:13px;letter-spacing:-0.1px;color:#000">0</div>
<div class="t" style="left:225.5px;top:483.00px;font-size:13px;letter-spacing:-0.1px;color:#000">DÉBITO</div>
<div class="t" style="left:375.5px;top:483.00px;font-size:13px;letter-spacing:-0.1px;color:#000">DÉBITO</div>
<div class="t" style="left:488.5px;top:483.00px;font-size:13px;letter-spacing:-0.1px;color:#000">0</div>
<div class="t" style="left:601.5px;top:483.00px;font-size:13px;letter-spacing:-0.1px;color:#000">0</div>
<div class="t" style="left:714.5px;top:483.00px;font-size:13px;letter-spacing:-0.1px;color:#000">0</div>
<div class="t" style="left:827.5px;top:483.00px;font-size:13px;letter-spacing:-0.1px;color:#000">0</div>
<div class="t" style="left:940.5px;top:483.00px;font-size:13px;letter-spacing:-0.1px;color:#000">1</div>
<div class="t" style="left:1053.5px;top:483.00px;font-size:13px;letter-spacing:-0.1px;color:#000">0</div>
<div class="t" style="left:225.5px;top:500.00px;font-size:13px;letter-spacing:-0.1px;color:#fff">CRÉDITO PAGSEGURO</div>
<div class="t" style="left:375.5px;top:500.00px;font-size:13px;letter-spacing:-0.1px;color:#fff">CRÉDITO</div>
<div class="t" style="left:488.5px;top:500.00px;font-size:13px;letter-spacing:-0.1px;color:#fff">4,99</div>
<div class="t" style="left:601.5px;top:500.00px;font-size:13px;letter-spacing:-0.1px;color:#fff">0</div>
<div class="t" style="left:714.5px;top:500.00px;font-size:13px;letter-spacing:-0.1px;color:#fff">0</div>
<div class="t" style="left:827.5px;top:500.00px;font-size:13px;letter-spacing:-0.1px;color:#fff">0</div>
<div class="t" style="left:940.5px;top:500.00px;font-size:13px;letter-spacing:-0.1px;color:#fff">1</div>
<div class="t" style="left:1053.5px;top:500.00px;font-size:13px;letter-spacing:-0.1px;color:#fff">0</div>
<div class="t" style="left:225.5px;top:517.00px;font-size:13px;letter-spacing:-0.1px;color:#000">PIX</div>
<div class="t" style="left:375.5px;top:517.00px;font-size:13px;letter-spacing:-0.1px;color:#000">PIX</div>
<div class="t" style="left:488.5px;top:517.00px;font-size:13px;letter-spacing:-0.1px;color:#000">0</div>
<div class="t" style="left:601.5px;top:517.00px;font-size:13px;letter-spacing:-0.1px;color:#000">0</div>
<div class="t" style="left:714.5px;top:517.00px;font-size:13px;letter-spacing:-0.1px;color:#000">0</div>
<div class="t" style="left:827.5px;top:517.00px;font-size:13px;letter-spacing:-0.1px;color:#000">0</div>
<div class="t" style="left:940.5px;top:517.00px;font-size:13px;letter-spacing:-0.1px;color:#000">1</div>
<div class="t" style="left:1053.5px;top:517.00px;font-size:13px;letter-spacing:-0.1px;color:#000">0</div>
<div class="t" style="left:225.5px;top:534.00px;font-size:13px;letter-spacing:-0.1px;color:#000">CHEQUE</div>
<div class="t" style="left:375.5px;top:534.00px;font-size:13px;letter-spacing:-0.1px;color:#000">CHEQUE</div>
<div class="t" style="left:488.5px;top:534.00px;font-size:13px;letter-spacing:-0.1px;color:#000">0</div>
<div class="t" style="left:601.5px;top:534.00px;font-size:13px;letter-spacing:-0.1px;color:#000">0</div>
<div class="t" style="left:714.5px;top:534.00px;font-size:13px;letter-spacing:-0.1px;color:#000">0</div>
<div class="t" style="left:827.5px;top:534.00px;font-size:13px;letter-spacing:-0.1px;color:#000">0</div>
<div class="t" style="left:940.5px;top:534.00px;font-size:13px;letter-spacing:-0.1px;color:#000">1</div>
<div class="t" style="left:1053.5px;top:534.00px;font-size:13px;letter-spacing:-0.1px;color:#000">0</div>
<div class="t" style="left:225.5px;top:551.00px;font-size:13px;letter-spacing:-0.1px;color:#000">VOUCHER</div>
<div class="t" style="left:375.5px;top:551.00px;font-size:13px;letter-spacing:-0.1px;color:#000">VOUCHER</div>
<div class="t" style="left:488.5px;top:551.00px;font-size:13px;letter-spacing:-0.1px;color:#000">0</div>
<div class="t" style="left:601.5px;top:551.00px;font-size:13px;letter-spacing:-0.1px;color:#000">0</div>
<div class="t" style="left:714.5px;top:551.00px;font-size:13px;letter-spacing:-0.1px;color:#000">0</div>
<div class="t" style="left:827.5px;top:551.00px;font-size:13px;letter-spacing:-0.1px;color:#000">0</div>
<div class="t" style="left:940.5px;top:551.00px;font-size:13px;letter-spacing:-0.1px;color:#000">1</div>
<div class="t" style="left:1053.5px;top:551.00px;font-size:13px;letter-spacing:-0.1px;color:#000">0</div>
<div class="t" style="left:225.5px;top:568.00px;font-size:13px;letter-spacing:-0.1px;color:#000">CONVÊNIO</div>
<div class="t" style="left:375.5px;top:568.00px;font-size:13px;letter-spacing:-0.1px;color:#000">CONVÊNIO</div>
<div class="t" style="left:488.5px;top:568.00px;font-size:13px;letter-spacing:-0.1px;color:#000">0</div>
<div class="t" style="left:601.5px;top:568.00px;font-size:13px;letter-spacing:-0.1px;color:#000">0</div>
<div class="t" style="left:714.5px;top:568.00px;font-size:13px;letter-spacing:-0.1px;color:#000">0</div>
<div class="t" style="left:827.5px;top:568.00px;font-size:13px;letter-spacing:-0.1px;color:#000">0</div>
<div class="t" style="left:940.5px;top:568.00px;font-size:13px;letter-spacing:-0.1px;color:#000">1</div>
<div class="t" style="left:1053.5px;top:568.00px;font-size:13px;letter-spacing:-0.1px;color:#000">0</div>
<svg class="a" style="left:226px;top:684px" width="8" height="9" viewBox="0 0 8 9"><path d="M6.5 1L2 4.5L6.5 8" fill="none" stroke="#606060" stroke-width="2"/></svg>
<div class="a" style="left:239px;top:681px;width:17px;height:15px;background:#cdcdcd"></div>
<svg class="a" style="left:1124px;top:684px" width="8" height="9" viewBox="0 0 8 9"><path d="M1.5 1L6 4.5L1.5 8" fill="none" stroke="#606060" stroke-width="2"/></svg>
<!--/BODY-->
</body></html>
